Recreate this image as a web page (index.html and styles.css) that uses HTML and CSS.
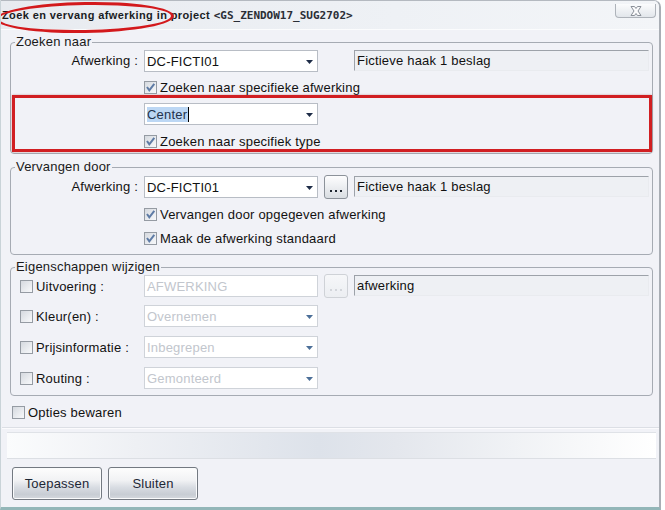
FILE: index.html
```html
<!DOCTYPE html>
<html>
<head>
<meta charset="utf-8">
<link rel="stylesheet" href="styles.css">
</head>
<body>
<div class="win">
  <div class="titlebar">
    <span class="title">Zoek en vervang afwerking in project <span class="proj">&lt;GS_ZENDOW17_SUG2702&gt;</span></span>
    <span class="close"><svg width="16" height="10" viewBox="0 0 16 10"><path d="M3 0.5 L6.5 0.5 L8 2.5 L9.5 0.5 L13 0.5 L10 5 L13 9.5 L9.5 9.5 L8 7.5 L6.5 9.5 L3 9.5 L6 5 Z" fill="#fbfbfc" stroke="#8a9099" stroke-width="1"/></svg></span>
    <span class="ellipse"></span>
  </div>
  <div class="main">
    <fieldset class="group g1">
      <legend>Zoeken naar</legend>
      <div class="row first">
        <span class="lbl">Afwerking :</span>
        <div class="combo"><span class="val">DC-FICTI01</span><svg class="arrow" width="7" height="4" viewBox="0 0 7 4"><path d="M0 0 H7 L3.5 4 Z" fill="#1e2c47"/></svg></div>
        <span class="nobtn"></span>
        <div class="field">Fictieve haak 1 beslag</div>
      </div>
      <div class="crow c1"><span class="cb"><svg width="11" height="11" viewBox="0 0 11 11"><path d="M2 5 L4.3 8.3 L9.3 1.8" fill="none" stroke="#5f7ca6" stroke-width="2"/></svg></span>Zoeken naar specifieke afwerking</div>
      <div class="mark">
        <div class="row">
          <div class="combo"><span class="val"><span class="sel">Center</span><span class="caret"></span></span><svg class="arrow" width="7" height="4" viewBox="0 0 7 4"><path d="M0 0 H7 L3.5 4 Z" fill="#1e2c47"/></svg></div>
        </div>
        <div class="crow c2"><span class="cb"><svg width="11" height="11" viewBox="0 0 11 11"><path d="M2 5 L4.3 8.3 L9.3 1.8" fill="none" stroke="#5f7ca6" stroke-width="2"/></svg></span>Zoeken naar specifiek type</div>
      </div>
    </fieldset>

    <fieldset class="group g2">
      <legend>Vervangen door</legend>
      <div class="row first">
        <span class="lbl">Afwerking :</span>
        <div class="combo"><span class="val">DC-FICTI01</span><svg class="arrow" width="7" height="4" viewBox="0 0 7 4"><path d="M0 0 H7 L3.5 4 Z" fill="#1e2c47"/></svg></div>
        <span class="dots"><svg width="12" height="2" viewBox="0 0 12 2"><rect x="0" y="0" width="2" height="2" fill="#1f2630"/><rect x="5" y="0" width="2" height="2" fill="#1f2630"/><rect x="10" y="0" width="2" height="2" fill="#1f2630"/></svg></span>
        <div class="field">Fictieve haak 1 beslag</div>
      </div>
      <div class="crow c3"><span class="cb"><svg width="11" height="11" viewBox="0 0 11 11"><path d="M2 5 L4.3 8.3 L9.3 1.8" fill="none" stroke="#5f7ca6" stroke-width="2"/></svg></span>Vervangen door opgegeven afwerking</div>
      <div class="crow c4"><span class="cb"><svg width="11" height="11" viewBox="0 0 11 11"><path d="M2 5 L4.3 8.3 L9.3 1.8" fill="none" stroke="#5f7ca6" stroke-width="2"/></svg></span>Maak de afwerking standaard</div>
    </fieldset>

    <fieldset class="group g3">
      <legend>Eigenschappen wijzigen</legend>
      <div class="row first">
        <span class="lbl2"><span class="cb"></span>Uitvoering :</span>
        <div class="combo dis"><span class="val">AFWERKING</span></div>
        <span class="dots dis"><svg width="12" height="2" viewBox="0 0 12 2"><rect x="0" y="0" width="2" height="2" fill="#d3d6db"/><rect x="5" y="0" width="2" height="2" fill="#d3d6db"/><rect x="10" y="0" width="2" height="2" fill="#d3d6db"/></svg></span>
        <div class="field">afwerking</div>
      </div>
      <div class="row r2">
        <span class="lbl2"><span class="cb"></span>Kleur(en) :</span>
        <div class="combo dis"><span class="val">Overnemen</span><svg class="arrow" width="7" height="4" viewBox="0 0 7 4"><path d="M0 0 H7 L3.5 4 Z" fill="#4c6f98"/></svg></div>
      </div>
      <div class="row r3">
        <span class="lbl2"><span class="cb"></span>Prijsinformatie :</span>
        <div class="combo dis"><span class="val">Inbegrepen</span><svg class="arrow" width="7" height="4" viewBox="0 0 7 4"><path d="M0 0 H7 L3.5 4 Z" fill="#4c6f98"/></svg></div>
      </div>
      <div class="row r3">
        <span class="lbl2"><span class="cb"></span>Routing :</span>
        <div class="combo dis"><span class="val">Gemonteerd</span><svg class="arrow" width="7" height="4" viewBox="0 0 7 4"><path d="M0 0 H7 L3.5 4 Z" fill="#4c6f98"/></svg></div>
      </div>
    </fieldset>

    <div class="crow opt"><span class="cb"></span>Opties bewaren</div>
    <div class="sep"></div>
    <div class="bar"></div>
    <div class="buttons">
      <span class="btn">Toepassen</span>
      <span class="btn">Sluiten</span>
    </div>
  </div>
</div>
</body>
</html>
```

FILE: styles.css
```css
* { box-sizing: border-box; }
html, body { margin: 0; padding: 0; background: #ffffff; }
body {
  font-family: "Liberation Sans", Arial, sans-serif;
  font-size: 13px;
  letter-spacing: 0.2px;
  color: #111;
}
.win {
  width: 661px;
  height: 510px;
  background: #f1f2f7;
  border-left: 1px solid #c9d3d8;
  border-right: 2px solid #a9aeb5;
  border-top: 1px solid #b4b9c0;
  border-bottom: 3px solid #93b6b8;
  border-top-right-radius: 7px;
  display: flex;
  flex-direction: column;
  overflow: hidden;
}
.titlebar {
  position: relative;
  height: 29px;
  flex: none;
  display: flex;
  align-items: flex-start;
  background: linear-gradient(90deg, #e8ebf0 0%, #eef1f5 60%, #f3f5f8 100%);
  border-bottom: 1px solid #fbfcfd;
}
.title {
  margin: 8px 0 0 1px;
  font-family: "Liberation Sans", Arial, sans-serif;
  font-weight: bold;
  font-size: 11px;
  letter-spacing: 0.4px;
  color: #1a1d24;
  line-height: 13px;
  white-space: nowrap;
}
.proj {
  font-family: "DejaVu Sans Mono", monospace;
  font-weight: bold;
  font-size: 11px;
  letter-spacing: 0;
  color: #2a2e36;
}
.close {
  margin: 3px 3px 0 auto;
  width: 41px;
  height: 14px;
  border: 1px solid #aeb3ba;
  border-top: none;
  border-radius: 0 0 4px 4px;
  background: linear-gradient(#fbfcfd, #e2e6eb);
  display: flex;
  align-items: center;
  justify-content: center;
}
.ellipse {
  position: absolute;
  left: -5px;
  top: 1px;
  width: 178px;
  height: 31px;
  border: 3px solid #d3191c;
  border-radius: 50%;
  transform: rotate(-1deg);
}
.main {
  flex: 1;
  display: flex;
  flex-direction: column;
  padding: 0 6px 0 9px;
}
.group {
  margin: 0;
  padding: 0;
  border: 1px solid #a6abb3;
  border-radius: 4px;
  min-inline-size: 0;
}
.group legend {
  margin-left: 4px;
  padding: 0 1px;
  font-size: 13px;
  line-height: 14px;
  color: #1a1a1a;
}
.g1 { margin-top: 5px; padding-bottom: 1px; }
.g2 { margin-top: 6px; padding-bottom: 9px; }
.g3 { margin-top: 5px; padding-bottom: 6px; }
.row {
  display: flex;
  align-items: flex-start;
}
.g1 .row.first { margin-top: 1px; }
.g2 .row.first { margin-top: 2px; }
.g3 .row.first { margin-top: 1px; }
.g3 .r2 { margin-top: 7px; }
.g3 .r3 { margin-top: 9px; }
.lbl {
  width: 127px;
  margin-right: 6px;
  text-align: right;
  line-height: 22px;
  white-space: nowrap;
}
.lbl2 {
  width: 133px;
  padding-left: 9px;
  display: flex;
  align-items: center;
  height: 22px;
  white-space: nowrap;
}
.lbl2 .cb { margin-right: 3px; }
.combo {
  width: 174px;
  height: 22px;
  flex: none;
  border: 1px solid #b8bdc5;
  background: #fff;
  display: flex;
  align-items: center;
  padding: 0 4px 0 2px;
}
.combo .val { flex: 1; display: flex; align-items: center; white-space: nowrap; }
.combo .arrow { margin-top: 1px; }
.combo.dis { border-color: #cfd3d9; }
.combo.dis .val { color: #c2c6cd; }
.sel { background: #bcd7f4; color: #23334d; padding-right: 1px; line-height: 15px; }
.caret { width: 1px; height: 15px; background: #000; }
.nobtn { width: 36px; flex: none; }
.dots {
  width: 24px;
  height: 24px;
  margin: -1px 6px 0 6px;
  flex: none;
  border: 1px solid #8c929a;
  border-radius: 3px;
  background: linear-gradient(#fdfdfe 0%, #eceef1 50%, #d9dde2 100%);
  display: flex;
  align-items: flex-end;
  justify-content: center;
  padding-bottom: 6px;
}
.dots.dis {
  border-color: #cfd2d7;
  background: linear-gradient(#f6f7f9, #eceef2);
}
.field {
  flex: 1;
  height: 21px;
  margin-top: 0;
  margin-right: 3px;
  border-top: 1px solid #9da2a9;
  border-left: 1px solid #9da2a9;
  border-right: 1px solid #e9ebef;
  border-bottom: 1px solid #e9ebef;
  background: #eef0f4;
  padding: 0 2px;
  line-height: 19px;
  color: #111;
}
.crow {
  display: flex;
  align-items: center;
  height: 13px;
  white-space: nowrap;
  padding-left: 133px;
}
.crow .cb { margin-right: 3px; }
.c1 { margin-top: 9px; }
.c2 { margin-top: 10px; padding-left: 0; }
.c3 { margin-top: 9px; }
.c4 { margin-top: 11px; }
.cb {
  width: 13px;
  height: 13px;
  flex: none;
  border: 1px solid #959ba3;
  background: linear-gradient(135deg, #d5d9df 0%, #eef0f3 70%, #f7f8fa 100%);
  display: inline-flex;
  align-items: center;
  justify-content: center;
}
.mark {
  margin: 1px 0 0 1px;
  border: 3px solid #d11f22;
  padding: 5px 0 1px 129px;
  box-shadow: 0 0 2px rgba(120, 0, 0, 0.35);
}
.opt { margin-top: 10px; padding-left: 2px; }
.sep {
  margin: 8px -8px 0 -8px;
  height: 2px;
  border-top: 1px solid #dcdfe5;
  border-bottom: 1px solid #fbfbfd;
}
.bar {
  margin: 3px -3px 0 -3px;
  height: 27px;
  border-top: 1px solid #dfe2e7;
  border-bottom: 1px solid #dcdfe4;
  background: linear-gradient(90deg, #fbfcfd 0%, #eef0f4 20%, #dde2ea 48%, #e4e7ed 60%, #f0f2f5 78%, #ffffff 100%);
}
.buttons {
  display: flex;
  gap: 6px;
  margin: 8px 0 0 2px;
}
.btn {
  width: 90px;
  height: 33px;
  border: 1px solid #737981;
  border-radius: 3px;
  background: linear-gradient(#fdfdfd 0%, #f1f2f4 40%, #d9dde3 62%, #c8cdd4 85%, #d5d9de 100%);
  display: flex;
  align-items: center;
  justify-content: center;
  color: #1d2735;
  font-size: 13px;
  box-shadow: inset 0 0 0 1px #fafbfc;
}
```
